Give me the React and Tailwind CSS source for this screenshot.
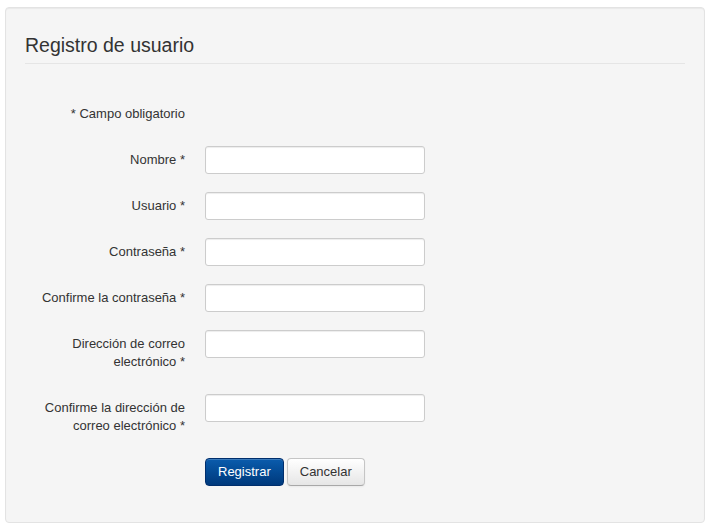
export default function App() {
  const rows = [
    { label: ["Nombre *"] },
    { label: ["Usuario *"] },
    { label: ["Contraseña *"] },
    { label: ["Confirme la contraseña *"] },
    { label: ["Dirección de correo", "electrónico *"] },
    { label: ["Confirme la dirección de", "correo electrónico *"] },
  ];
  return (
    <div className="w-[711px] h-[526px] bg-white pt-[7px] pl-[5px]" style={{ fontFamily: '"Liberation Sans", Arial, sans-serif' }}>
      <div className="w-[700px] h-[516px] bg-[#f5f5f5] border border-[#e3e3e3] rounded-[4px] px-[19px] pt-[25px] shadow-[inset_0_1px_1px_rgba(0,0,0,0.05)]">
        <div className="border-b border-[#e5e5e5] pb-[6px]">
          <h2 className="text-[19.5px] leading-[24px] text-[#333]">Registro de usuario</h2>
        </div>
        <div className="text-[13px] leading-[18px] text-[#333]">
          <div className="flex mt-[36px] mb-[18px] h-[28px]">
            <div className="w-[160px] text-right pt-[5px]">* Campo obligatorio</div>
          </div>
          <div className="flex flex-col gap-[18px]">
            {rows.map((r, i) => (
              <div key={i} className="flex">
                <div className="w-[160px] shrink-0 text-right py-[5px]">
                  {r.label.map((l, j) => (
                    <div key={j}>{l}</div>
                  ))}
                </div>
                <div className="ml-[20px]">
                  <input type="text" className="block w-[220px] h-[28px] bg-white border border-[#cccccc] rounded-[3px] shadow-[inset_0_1px_1px_rgba(0,0,0,0.075)] px-[6px] outline-none" />
                </div>
              </div>
            ))}
            <div className="flex ml-[180px] gap-[3px]">
              <button className="h-[28px] px-[12px] text-[13px] leading-[18px] text-white rounded-[4px] border border-[#002e6c] bg-gradient-to-b from-[#0b5cad] to-[#00397c] shadow-[inset_0_1px_0_rgba(255,255,255,0.2)]">
                Registrar
              </button>
              <button className="h-[28px] px-[12px] text-[13px] leading-[18px] text-[#333] rounded-[4px] border border-[#c5c5c5] border-b-[#a8a8a8] bg-gradient-to-b from-white to-[#e6e6e6] shadow-[inset_0_1px_0_rgba(255,255,255,0.2),0_1px_2px_rgba(0,0,0,0.05)]">
                Cancelar
              </button>
            </div>
          </div>
        </div>
      </div>
    </div>
  );
}
